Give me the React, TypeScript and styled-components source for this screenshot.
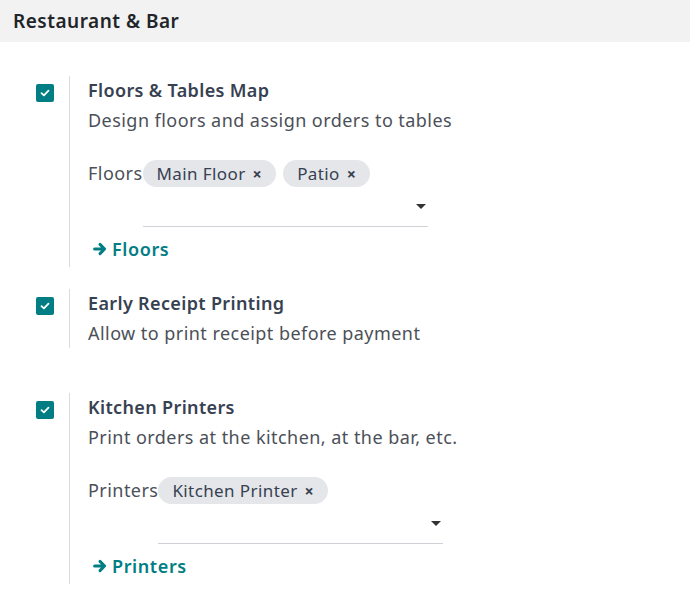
import React from 'react'
import styled, { createGlobalStyle } from 'styled-components'

const Global = createGlobalStyle`
  html, body {
    margin: 0;
    padding: 0;
    background: #fff;
  }
  body {
    font-family: 'Noto Sans', 'Open Sans', sans-serif;
    color: #374151;
  }
`

const TEAL = '#017e84'

interface Setting {
  title: string
  description: string
  field?: {
    label: string
    tags: string[]
  }
  link?: string
  gapBefore: number
}

const settings: Setting[] = [
  {
    title: 'Floors & Tables Map',
    description: 'Design floors and assign orders to tables',
    field: { label: 'Floors', tags: ['Main Floor', 'Patio'] },
    link: 'Floors',
    gapBefore: 34
  },
  {
    title: 'Early Receipt Printing',
    description: 'Allow to print receipt before payment',
    gapBefore: 22
  },
  {
    title: 'Kitchen Printers',
    description: 'Print orders at the kitchen, at the bar, etc.',
    field: { label: 'Printers', tags: ['Kitchen Printer'] },
    link: 'Printers',
    gapBefore: 45
  }
]

const CheckIcon = () => (
  <svg width="10" height="8" viewBox="0 0 10 8">
    <path d="M1.5 4.2 L3.9 6.4 L8.5 1.6" fill="none" stroke="#fff" strokeWidth="1.8" strokeLinecap="round" strokeLinejoin="round" />
  </svg>
)

const ArrowIcon = () => (
  <svg width="14" height="14" viewBox="0 0 14 14">
    <path
      d="M1.6 7 H11.4 M7 2.4 L11.6 7 L7 11.6"
      fill="none"
      stroke={TEAL}
      strokeWidth="3"
      strokeLinecap="round"
      strokeLinejoin="round"
    />
  </svg>
)

const SettingBlock = ({ s }: { s: Setting }) => (
  <S.Setting style={{ marginTop: s.gapBefore }}>
    <S.CheckCol>
      <S.Checkbox>
        <CheckIcon />
      </S.Checkbox>
    </S.CheckCol>
    <S.Content>
      <S.Title>{s.title}</S.Title>
      <S.Description>{s.description}</S.Description>
      {s.field && (
        <S.FieldRow>
          <S.FieldLabel>{s.field.label}</S.FieldLabel>
          <S.TagsInput>
            {s.field.tags.map(t => (
              <S.Tag key={t}>
                {t}
                <S.TagClose>×</S.TagClose>
              </S.Tag>
            ))}
            <S.Select>
              <S.Caret />
            </S.Select>
          </S.TagsInput>
        </S.FieldRow>
      )}
      {s.link && (
        <S.Link>
          <ArrowIcon />
          {s.link}
        </S.Link>
      )}
    </S.Content>
  </S.Setting>
)

export default function App() {
  return (
    <S.Page>
      <Global />
      <S.Header>Restaurant &amp; Bar</S.Header>
      {settings.map(s => (
        <SettingBlock key={s.title} s={s} />
      ))}
    </S.Page>
  )
}

const S = {
  Page: styled.div`
    width: 690px;
    height: 590px;
    overflow: hidden;
  `,
  Header: styled.div`
    height: 42px;
    background: #f2f2f2;
    display: flex;
    align-items: center;
    padding-left: 13px;
    font-size: 19px;
    letter-spacing: 0.5px;
    font-weight: 600;
    color: #212529;
  `,
  Setting: styled.div`
    display: flex;
    padding-left: 36px;
  `,
  CheckCol: styled.div`
    width: 33px;
    padding-top: 8px;
  `,
  Checkbox: styled.div`
    width: 18px;
    height: 18px;
    border-radius: 2px;
    background: ${TEAL};
    display: flex;
    align-items: center;
    justify-content: center;
  `,
  Content: styled.div`
    border-left: 1px solid #d9dcdf;
    padding: 1px 0 2px 18px;
    display: flex;
    flex-direction: column;
  `,
  Title: styled.div`
    font-size: 18px;
    letter-spacing: 0.35px;
    line-height: 26px;
    font-weight: 600;
    color: #374151;
  `,
  Description: styled.div`
    margin-top: 4px;
    font-size: 18px;
    letter-spacing: 0.45px;
    line-height: 26px;
    color: #4b5058;
  `,
  FieldRow: styled.div`
    display: flex;
    align-items: flex-start;
    margin-top: 27px;
  `,
  FieldLabel: styled.div`
    font-size: 18px;
    letter-spacing: 0.45px;
    line-height: 27px;
    color: #4b5058;
  `,
  TagsInput: styled.div`
    width: 285px;
    display: flex;
    flex-wrap: wrap;
    gap: 0 7px;
  `,
  Tag: styled.div`
    height: 27px;
    display: flex;
    align-items: center;
    padding: 0 14px;
    border-radius: 14px;
    background: #e4e6ea;
    font-size: 17px;
    letter-spacing: 0.4px;
    color: #374151;
  `,
  TagClose: styled.span`
    margin-left: 7px;
    font-size: 16px;
    font-weight: 700;
    color: #374151;
  `,
  Select: styled.div`
    width: 100%;
    height: 40px;
    border-bottom: 1px solid #cfd2d6;
    display: flex;
    justify-content: flex-end;
    align-items: center;
    padding-right: 1px;
    box-sizing: border-box;
  `,
  Caret: styled.div`
    width: 0;
    height: 0;
    border-left: 5px solid transparent;
    border-right: 5px solid transparent;
    border-top: 5px solid #333;
    margin-right: 1px;
  `,
  Link: styled.div`
    margin-top: 10px;
    margin-left: 5px;
    display: flex;
    align-items: center;
    gap: 5px;
    font-size: 18px;
    letter-spacing: 0.6px;
    line-height: 24px;
    font-weight: 600;
    color: ${TEAL};
    padding-bottom: 4px;
  `
}
